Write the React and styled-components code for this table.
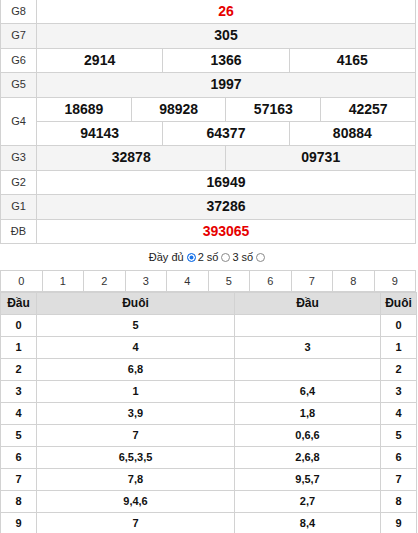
import styled, { createGlobalStyle } from 'styled-components';

const GlobalStyle = createGlobalStyle`
  body {
    margin: 0;
    background: #fff;
    font-family: "Liberation Sans", Arial, sans-serif;
  }
`;

const Wrapper = styled.div`
  width: 416px;
  margin-top: -1px;
`;

const Table = styled.table`
  width: 100%;
  border-collapse: collapse;
  table-layout: fixed;
`;

const Row = styled.tr`
  background: ${(p) => (p.$alt ? '#f4f4f4' : '#fff')};
`;

const Label = styled.td`
  border: 1px solid #d2d2d2;
  padding: 0;
  text-align: center;
  font-size: 11px;
  color: #333;
  line-height: 23.4px;
`;

const Prize = styled.td`
  border: 1px solid #d2d2d2;
  padding: 0;
  text-align: center;
  font-size: 14px;
  font-weight: bold;
  line-height: 23.4px;
  color: ${(p) => (p.$red ? '#e60000' : '#111')};
`;

const Options = styled.div`
  display: flex;
  justify-content: center;
  align-items: center;
  height: 26px;
  font-size: 11px;
  color: #222;
  white-space: pre;
`;

const Radio = styled.span`
  display: inline-block;
  box-sizing: border-box;
  width: 9px;
  height: 9px;
  border-radius: 50%;
  border: 1px solid ${(p) => (p.$checked ? '#1a73e8' : '#8a8a8a')};
  background: ${(p) => (p.$checked ? '#1a73e8' : '#fff')};
  box-shadow: ${(p) => (p.$checked ? 'inset 0 0 0 1.5px #fff' : 'none')};
  margin: 0 2px 0 3px;
`;

const DigitCell = styled.td`
  border: 1px solid #d2d2d2;
  padding: 0;
  text-align: center;
  font-size: 11px;
  color: #333;
  line-height: 20px;
`;

const HeadCell = styled.th`
  border: 1px solid #d2d2d2;
  padding: 0;
  background: #dedede;
  text-align: center;
  font-size: 12px;
  font-weight: bold;
  color: #111;
  line-height: 21px;
`;

const Cell = styled.td`
  border: 1px solid #d2d2d2;
  padding: 0;
  text-align: center;
  font-size: 11px;
  font-weight: bold;
  color: #111;
  line-height: 21px;
`;

const prizes = [
  { label: 'G8', rows: [['26']], red: true },
  { label: 'G7', rows: [['305']], alt: true },
  { label: 'G6', rows: [['2914', '1366', '4165']] },
  { label: 'G5', rows: [['1997']], alt: true },
  { label: 'G4', rows: [['18689', '98928', '57163', '42257'], ['94143', '64377', '80884']] },
  { label: 'G3', rows: [['32878', '09731']], alt: true },
  { label: 'G2', rows: [['16949']] },
  { label: 'G1', rows: [['37286']], alt: true },
  { label: 'ĐB', rows: [['393065']], red: true },
];

const loto = [
  ['5', ''],
  ['4', '3'],
  ['6,8', ''],
  ['1', '6,4'],
  ['3,9', '1,8'],
  ['7', '0,6,6'],
  ['6,5,3,5', '2,6,8'],
  ['7,8', '9,5,7'],
  ['9,4,6', '2,7'],
  ['7', '8,4'],
];

function App() {
  return (
    <Wrapper>
      <GlobalStyle />
      <Table>
        <colgroup>
          <col style={{ width: 36 }} />
          {Array.from({ length: 12 }).map((_, i) => (
            <col key={i} />
          ))}
        </colgroup>
        <tbody>
          {prizes.map((p) =>
            p.rows.map((nums, ri) => (
              <Row key={p.label + ri} $alt={p.alt}>
                {ri === 0 && <Label rowSpan={p.rows.length}>{p.label}</Label>}
                {nums.map((n) => (
                  <Prize key={n} colSpan={12 / nums.length} $red={p.red}>
                    {n}
                  </Prize>
                ))}
              </Row>
            ))
          )}
        </tbody>
      </Table>

      <Options>
        <span>Đầy đủ</span>
        <Radio $checked />
        <span>2 số</span>
        <Radio />
        <span>3 số</span>
        <Radio />
      </Options>

      <Table>
        <tbody>
          <tr>
            {Array.from({ length: 10 }).map((_, i) => (
              <DigitCell key={i}>{i}</DigitCell>
            ))}
          </tr>
        </tbody>
      </Table>

      <Table>
        <colgroup>
          <col style={{ width: 36 }} />
          <col style={{ width: 198 }} />
          <col style={{ width: 146 }} />
          <col style={{ width: 36 }} />
        </colgroup>
        <thead>
          <tr>
            <HeadCell>Đầu</HeadCell>
            <HeadCell>Đuôi</HeadCell>
            <HeadCell>Đầu</HeadCell>
            <HeadCell>Đuôi</HeadCell>
          </tr>
        </thead>
        <tbody>
          {loto.map(([tail, head], i) => (
            <tr key={i}>
              <Cell>{i}</Cell>
              <Cell>{tail}</Cell>
              <Cell>{head}</Cell>
              <Cell>{i}</Cell>
            </tr>
          ))}
        </tbody>
      </Table>
    </Wrapper>
  );
}

export default App;
